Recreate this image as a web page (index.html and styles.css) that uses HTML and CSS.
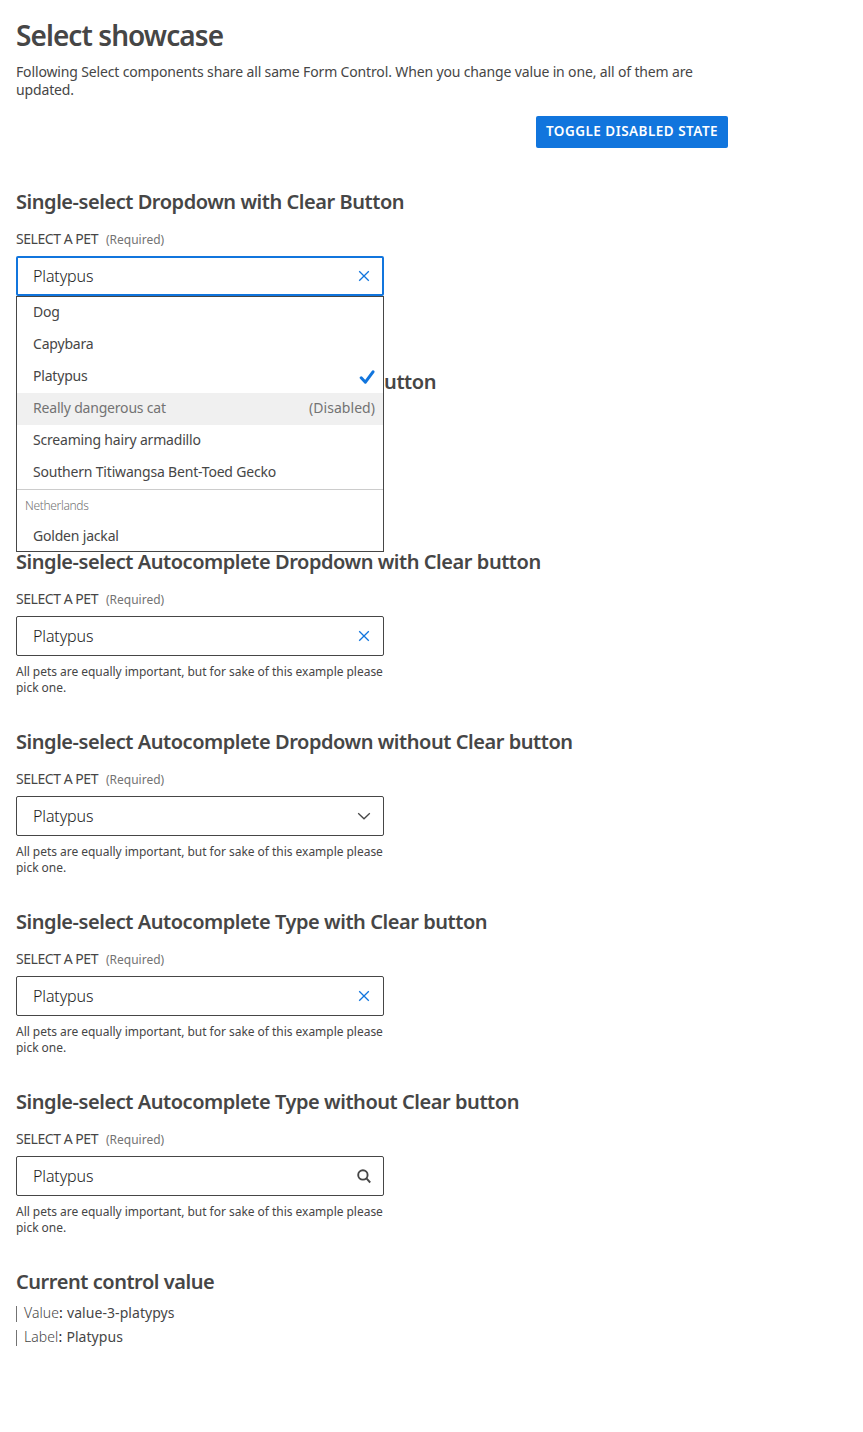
FILE: index.html
```
<!DOCTYPE html>
<html lang="en">
<head>
<meta charset="utf-8">
<title>Select showcase</title>
<link rel="stylesheet" href="styles.css">
</head>
<body>
<main class="page">
  <h1 class="title">Select showcase</h1>
  <p class="intro">Following Select components share all same Form Control. When you change value in one, all of them are<br>updated.</p>
  <div class="actions"><button class="button" type="button">TOGGLE DISABLED STATE</button></div>

  <section class="example">
    <h2 class="heading">Single-select Dropdown with Clear Button</h2>
    <div class="label"><span class="name">SELECT A PET</span><span class="required">(Required)</span></div>
    <div class="field field-open"><span class="value">Platypus</span>
      <svg class="icon icon-clear" viewBox="0 0 16 16"><path d="M3.2 3.2l9.6 9.6M12.8 3.2l-9.6 9.6"/></svg>
      <div class="menu">
        <div class="option"><span>Dog</span></div>
        <div class="option"><span>Capybara</span></div>
        <div class="option"><span>Platypus</span><svg class="check" viewBox="0 0 16 16"><path d="M2.200 8.800l4.200 4.400L14 2.800"/></svg></div>
        <div class="option option-disabled"><span>Really dangerous cat</span><span class="state">(Disabled)</span></div>
        <div class="option"><span>Screaming hairy armadillo</span></div>
        <div class="option"><span>Southern Titiwangsa Bent-Toed Gecko</span></div>
        <div class="group">Netherlands</div>
        <div class="option"><span>Golden jackal</span></div>
      </div>
    </div>
    <p class="hint covered">All pets are equally important, but for sake of this example please<br>pick one.</p>
  </section>

  <section class="example">
    <h2 class="heading">Single-select Dropdown without Clear Button</h2>
    <div class="covered">
      <div class="label"><span class="name">SELECT A PET</span><span class="required">(Required)</span></div>
      <div class="field"><span class="value">Platypus</span>
        <svg class="icon icon-dark" viewBox="0 0 16 16"><path d="M2.200 5.200L8 10.800l5.800-5.600"/></svg></div>
      <p class="hint">All pets are equally important, but for sake of this example please<br>pick one.</p>
    </div>
  </section>

  <section class="example">
    <h2 class="heading">Single-select Autocomplete Dropdown with Clear button</h2>
    <div class="label"><span class="name">SELECT A PET</span><span class="required">(Required)</span></div>
    <div class="field"><span class="value">Platypus</span>
      <svg class="icon icon-clear" viewBox="0 0 16 16"><path d="M3.2 3.2l9.6 9.6M12.8 3.2l-9.6 9.6"/></svg></div>
    <p class="hint">All pets are equally important, but for sake of this example please<br>pick one.</p>
  </section>

  <section class="example">
    <h2 class="heading">Single-select Autocomplete Dropdown without Clear button</h2>
    <div class="label"><span class="name">SELECT A PET</span><span class="required">(Required)</span></div>
    <div class="field"><span class="value">Platypus</span>
      <svg class="icon icon-dark" viewBox="0 0 16 16"><path d="M2.200 5.200L8 10.800l5.800-5.600"/></svg></div>
    <p class="hint">All pets are equally important, but for sake of this example please<br>pick one.</p>
  </section>

  <section class="example">
    <h2 class="heading">Single-select Autocomplete Type with Clear button</h2>
    <div class="label"><span class="name">SELECT A PET</span><span class="required">(Required)</span></div>
    <div class="field"><span class="value">Platypus</span>
      <svg class="icon icon-clear" viewBox="0 0 16 16"><path d="M3.2 3.2l9.6 9.6M12.8 3.2l-9.6 9.6"/></svg></div>
    <p class="hint">All pets are equally important, but for sake of this example please<br>pick one.</p>
  </section>

  <section class="example">
    <h2 class="heading">Single-select Autocomplete Type without Clear button</h2>
    <div class="label"><span class="name">SELECT A PET</span><span class="required">(Required)</span></div>
    <div class="field"><span class="value">Platypus</span>
      <svg class="icon icon-search" viewBox="0 0 16 16"><circle cx="6.900" cy="6.900" r="4.700"/><path d="M10.200 10.200l4 4.300"/></svg></div>
    <p class="hint">All pets are equally important, but for sake of this example please<br>pick one.</p>
  </section>

  <section class="current">
    <h2 class="heading">Current control value</h2>
    <div class="entry"><span class="key">Value</span><span class="colon">: </span><span>value-3-platypys</span></div>
    <div class="entry"><span class="key">Label</span><span class="colon">: </span><span>Platypus</span></div>
  </section>
</main>
</body>
</html>
```
FILE: styles.css
```
* { box-sizing: border-box; }
body { margin: 0; background: #fff; color: #464646; font-family: "Noto Sans", sans-serif; font-size: 14px; }
.page { width: 728px; padding: 16px 0 0 16px; white-space: nowrap; }
.title { margin: 0; font-size: 28px; line-height: 39px; font-weight: 600; letter-spacing: -0.93px; }
.intro { margin: 8px 0 17px; line-height: 18px; letter-spacing: -0.145px; }
.actions { display: flex; justify-content: flex-end; margin-bottom: 42px; }
.button { width: 192px; height: 32px; padding: 0 0 2px; border: 0; border-radius: 2px; background: #1175dd; color: #fff; font: 600 13.5px/30px "Noto Sans", sans-serif; letter-spacing: 0.48px; }
.example { width: 368px; height: 180px; }
.heading { margin: 0; font-size: 20px; line-height: 24px; font-weight: 600; letter-spacing: -0.45px; }
.label { display: flex; align-items: baseline; gap: 8px; padding-top: 17px; height: 42px; line-height: 16px; }
.name { letter-spacing: -0.46px; }
.required { font-size: 12px; color: #737373; }
.field { position: relative; display: flex; align-items: center; justify-content: space-between; height: 40px; padding: 0 11px 0 16px; border: 1px solid #464646; border-radius: 2px; }
.field-open { border: 2px solid #1175dd; padding: 0 10px 0 15px; }
.value { font-size: 16px; line-height: 24px; font-weight: 300; letter-spacing: -0.12px; color: #1b1b1b; }
.icon { width: 16px; height: 16px; fill: none; stroke-width: 1.3; }
.icon-clear { stroke: #1175dd; }
.icon-dark { stroke: #464646; }
.icon-search { stroke: #464646; stroke-width: 1.9; }
.menu { position: absolute; z-index: 2; left: -2px; top: 38px; width: 368px; height: 256px; overflow: hidden; background: #fff; border: 1px solid #464646; }
.option { display: flex; align-items: center; justify-content: space-between; height: 32px; padding: 0 8px 2px 16px; line-height: 20px; letter-spacing: -0.19px; }
.option-disabled { background: #f0f0f0; color: #737373; }
.state { letter-spacing: 0.05px; }
.check { width: 16px; height: 16px; margin-top: 2px; fill: none; stroke: #1175dd; stroke-width: 3; stroke-linecap: round; stroke-linejoin: round; }
.group { height: 32px; padding-left: 8px; border-top: 1px solid #ccc; font-size: 12px; line-height: 32px; font-weight: 300; letter-spacing: -0.33px; color: #737373; }
.hint { margin: 8px 0 0; font-size: 12px; line-height: 16px; letter-spacing: -0.03px; }
/* content lying under the open menu */
.covered { visibility: hidden; }
.entry { height: 16px; margin-top: 12px; padding-left: 7px; border-left: 1px solid #737373; line-height: 14px; letter-spacing: 0.06px; white-space: pre; }
.entry + .entry { margin-top: 8px; }
.key { font-weight: 300; }
.colon { color: #1b1b1b; letter-spacing: 0.3px; }
```
